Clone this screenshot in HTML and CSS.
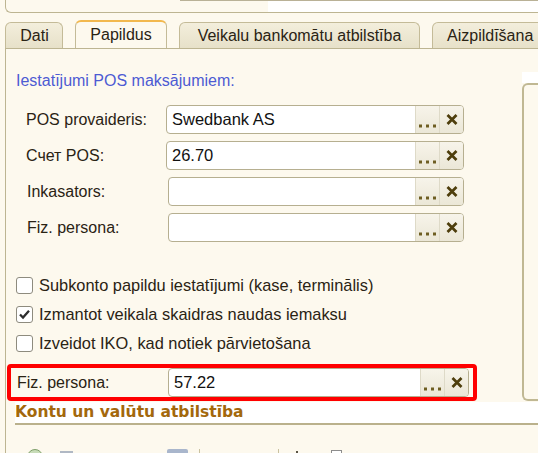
FILE: index.html
```html
<!DOCTYPE html>
<html lang="lv">
<head>
<meta charset="utf-8">
<title>Papildus</title>
<link rel="stylesheet" href="styles.css">
</head>
<body>
<div class="top">
  <div class="top-blank"></div>
  <div class="top-field"></div>
  <div class="top-white"></div>
</div>

<div class="book">
  <div class="tabs">
    <div class="tab tab-dati">Dati</div>
    <div class="tab tab-extra active">Papildus</div>
    <div class="tab tab-atm">Veikalu bankomātu atbilstība</div>
    <div class="tab tab-fill">Aizpildīšana</div>
  </div>

  <div class="panel">
    <div class="panel-body">
      <div class="main">
        <div class="caption">Iestatījumi POS maksājumiem:</div>

        <div class="fields">
          <span class="label">POS provaideris:</span>
          <div class="field">
            <span class="value">Swedbank AS</span>
            <span class="btn"><svg class="dots" width="17" height="4" viewBox="0 0 17 4"><rect x="0" y="0.5" width="3" height="3"/><rect x="7" y="0.5" width="3" height="3"/><rect x="14" y="0.5" width="3" height="3"/></svg></span>
            <span class="btn"><svg class="cross" width="12" height="11" viewBox="0 0 12 11"><path d="M1.5 1 L10.5 10 M10.5 1 L1.5 10"/></svg></span>
          </div>

          <span class="label">Счет POS:</span>
          <div class="field">
            <span class="value">26.70</span>
            <span class="btn"><svg class="dots" width="17" height="4" viewBox="0 0 17 4"><rect x="0" y="0.5" width="3" height="3"/><rect x="7" y="0.5" width="3" height="3"/><rect x="14" y="0.5" width="3" height="3"/></svg></span>
            <span class="btn"><svg class="cross" width="12" height="11" viewBox="0 0 12 11"><path d="M1.5 1 L10.5 10 M10.5 1 L1.5 10"/></svg></span>
          </div>

          <span class="label shift">Inkasators:</span>
          <div class="field shift">
            <span class="value"></span>
            <span class="btn"><svg class="dots" width="17" height="4" viewBox="0 0 17 4"><rect x="0" y="0.5" width="3" height="3"/><rect x="7" y="0.5" width="3" height="3"/><rect x="14" y="0.5" width="3" height="3"/></svg></span>
            <span class="btn"><svg class="cross" width="12" height="11" viewBox="0 0 12 11"><path d="M1.5 1 L10.5 10 M10.5 1 L1.5 10"/></svg></span>
          </div>

          <span class="label shift">Fiz. persona:</span>
          <div class="field shift">
            <span class="value"></span>
            <span class="btn"><svg class="dots" width="17" height="4" viewBox="0 0 17 4"><rect x="0" y="0.5" width="3" height="3"/><rect x="7" y="0.5" width="3" height="3"/><rect x="14" y="0.5" width="3" height="3"/></svg></span>
            <span class="btn"><svg class="cross" width="12" height="11" viewBox="0 0 12 11"><path d="M1.5 1 L10.5 10 M10.5 1 L1.5 10"/></svg></span>
          </div>
        </div>

        <div class="checks">
          <div class="check"><span class="box"></span>Subkonto papildu iestatījumi (kase, terminālis)</div>
          <div class="check"><span class="box"><svg width="15" height="15" viewBox="0 0 15 15"><path d="M3 7.5 L6 10.5 L12 3.8"/></svg></span>Izmantot veikala skaidras naudas iemaksu</div>
          <div class="check"><span class="box"></span>Izveidot IKO, kad notiek pārvietošana</div>
        </div>

        <div class="hl-row">
          <span class="label">Fiz. persona:</span>
          <div class="field">
            <span class="value">57.22</span>
            <span class="btn"><svg class="dots" width="17" height="4" viewBox="0 0 17 4"><rect x="0" y="0.5" width="3" height="3"/><rect x="7" y="0.5" width="3" height="3"/><rect x="14" y="0.5" width="3" height="3"/></svg></span>
            <span class="btn"><svg class="cross" width="12" height="11" viewBox="0 0 12 11"><path d="M1.5 1 L10.5 10 M10.5 1 L1.5 10"/></svg></span>
          </div>
          <span class="hl-frame"></span>
        </div>
      </div>

      <div class="side">
        <div class="side-cap"></div>
        <div class="side-box"></div>
      </div>
    </div>

    <div class="section">Kontu un valūtu atbilstība</div>

    <div class="toolbar">
      <span class="tb-ok"></span>
      <span class="tb-doc"></span>
      <span class="tb-blue"></span>
      <span class="tb-sep"></span>
      <span class="tb-sep wide"></span>
      <span class="tb-arrow"></span>
      <span class="tb-box"></span>
    </div>
  </div>
</div>
</body>
</html>
```

FILE: styles.css
```css
* {
  box-sizing: border-box;
}

html, body {
  margin: 0;
  padding: 0;
}

body {
  width: 538px;
  height: 453px;
  overflow: hidden;
  background: #fdf9ee;
  font-family: "Liberation Sans", Arial, sans-serif;
  font-size: 16px;
  color: #2a2314;
}

/* strip of the form above the tab book */
.top {
  display: flex;
  height: 13px;
  margin-left: 5px;
  border-left: 1px solid #bdb592;
  border-bottom: 1px solid #bdb592;
  border-bottom-left-radius: 6px;
}

.top-blank {
  width: 174px;
}

.top-field {
  width: 88px;
  border-top: 1px solid #b9b196;
}

.top-white {
  flex: 1;
  border-top: 1px solid #b9b196;
  background: #fff;
}

/* tab book */
.book {
  margin-left: 5px;
}

.tabs {
  display: flex;
  align-items: flex-end;
  gap: 12px;
  height: 29px;
  margin-top: 7px;
  border-bottom: 1px solid #bdb592;
  white-space: nowrap;
  overflow: hidden;
}

.tab {
  display: flex;
  align-items: center;
  justify-content: center;
  height: 26px;
  border: 1px solid #c4bb98;
  border-bottom: none;
  border-radius: 6px 6px 0 0;
  background: linear-gradient(#f3eedc, #e7e1c9);
  color: #2a2314;
  flex: none;
}

.tab-dati {
  width: 58px;
  padding-left: 1px;
}

.tab-extra {
  width: 92px;
}

.tab-atm {
  width: 241px;
}

.tab-fill {
  justify-content: flex-start;
  padding: 0 15px 0 14px;
}

.tab.active {
  height: 29px;
  margin-bottom: -1px;
  padding-bottom: 1px;
  border-top: 2px solid #f2b84e;
  background: #fdf9ee;
}

.panel {
  border-left: 1px solid #bdb592;
}

.panel-body {
  display: flex;
  height: 353px;
  padding-left: 10px;
}

.main {
  flex: none;
  width: 506px;
  padding-top: 23px;
}

.caption {
  line-height: 18px;
  color: #4d5bd3;
}

/* reference fields */
.fields {
  display: grid;
  grid-template-columns: 140px 298px;
  grid-auto-rows: 29px;
  row-gap: 7px;
  margin-top: 15px;
  padding-left: 10px;
}

.label {
  display: flex;
  align-items: center;
  color: #2a2314;
}

.label.shift {
  padding-left: 1px;
}

.field.shift {
  margin-left: 2px;
}

.field {
  display: flex;
  height: 29px;
  border: 1px solid #b6af90;
  border-radius: 4px;
  background: #fff;
  overflow: hidden;
}

.value {
  flex: 1;
  padding-left: 5px;
  line-height: 27px;
  font-size: 16.5px;
  color: #111;
}

.btn {
  display: flex;
  align-items: center;
  justify-content: center;
  width: 24px;
  border-left: 1px solid #dedac8;
  background: linear-gradient(#f7f4ea, #ebe7d7);
}

.btn .dots {
  margin-top: 13px;
  fill: #6e5e22;
}

.cross path {
  stroke: #4e3e0c;
  stroke-width: 2.7;
  fill: none;
}

/* check boxes */
.checks {
  margin-top: 29px;
}

.check {
  display: flex;
  align-items: center;
  height: 29px;
  gap: 6px;
  font-size: 16.4px;
  color: #2a2314;
}

.box {
  display: flex;
  align-items: center;
  justify-content: center;
  width: 17px;
  height: 17px;
  border: 1px solid #8e8b7e;
  border-radius: 3px;
  background: #fff;
}

.box path {
  fill: none;
  stroke: #2d2d2d;
  stroke-width: 2.3;
}

/* highlighted row */
.hl-row {
  position: relative;
  display: grid;
  grid-template-columns: 151px 301px;
  height: 29px;
  margin-top: 10px;
  padding-left: 1px;
}

.hl-frame {
  position: absolute;
  top: -4px;
  left: -9px;
  width: 470px;
  height: 37px;
  border: 4px solid #f00;
  border-radius: 4px;
  pointer-events: none;
}

/* right group box */
.side {
  flex: 1;
  padding-top: 23px;
}

.side-cap {
  height: 11px;
  background: #fff;
}

.side-box {
  width: 40px;
  height: 318px;
  border: 2px solid #c0b893;
  border-right: none;
  border-radius: 6px 0 0 6px;
  background: #fdf9ee;
}

/* section heading */
.section {
  height: 23px;
  margin-left: 9px;
  line-height: 21px;
  background: #fff;
  border-bottom: 2px solid #bab18c;
  font-family: "DejaVu Sans", sans-serif;
  font-weight: bold;
  font-size: 15.5px;
  color: #a3680c;
}

/* toolbar (cut off at the window edge) */
.toolbar {
  display: flex;
  align-items: flex-start;
  height: 28px;
  padding-top: 24px;
}

.tb-ok {
  width: 16px;
  height: 16px;
  margin-left: 21px;
  border: 1px solid #7e9f6a;
  border-radius: 50%;
  background: #c8dcb8;
}

.tb-doc {
  width: 13px;
  height: 14px;
  margin-left: 17px;
  margin-top: 2px;
  background: #b0b8c4;
}

.tb-blue {
  width: 21px;
  height: 14px;
  margin-left: 94px;
  border-radius: 2px;
  background: #a9b6cc;
}

.tb-sep {
  width: 1px;
  height: 14px;
  margin-left: 11px;
  background: #c9c1a0;
}

.tb-sep.wide {
  margin-left: 78px;
}

.tb-arrow {
  width: 2px;
  height: 14px;
  margin-left: 17px;
  margin-top: 2px;
  background: #5a5446;
}

.tb-box {
  width: 11px;
  height: 14px;
  margin-left: 33px;
  margin-top: 1px;
  border: 1px solid #8d8d8d;
  background: #fff;
}
```
